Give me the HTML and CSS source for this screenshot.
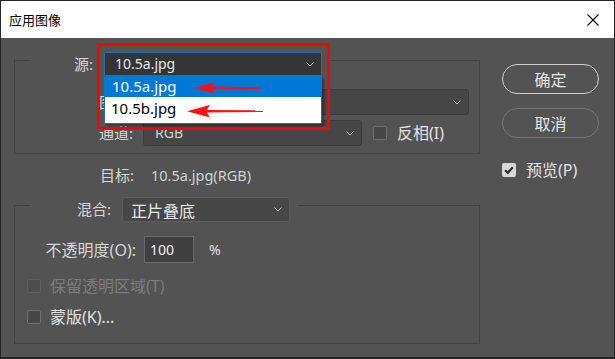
FILE: index.html
```html
<!DOCTYPE html>
<html lang="zh-CN">
<head>
<meta charset="utf-8">
<title>应用图像</title>
<link rel="stylesheet" href="styles.css">
</head>
<body>
<div class="window">
  <div class="titlebar">
    <span class="title">应用图像</span>
    <svg class="close" width="12" height="12" viewBox="0 0 12 12"><path d="M0.5 0.5 L11.5 11.5 M11.5 0.5 L0.5 11.5" stroke="#000" stroke-width="1.1" fill="none"/></svg>
  </div>
  <div class="body">
    <div class="left">
      <div class="group g1">
        <div class="legend lg1">
          <span class="lbl lbl-src">源:</span>
          <div class="select sel-src">
            <span class="stext">10.5a.jpg</span>
            <svg class="chev" width="8" height="5" viewBox="0 0 8 5"><path d="M0.5 0.5 L4 4 L7.5 0.5" stroke="#bdbdbd" stroke-width="1" fill="none"/></svg>
            <div class="redbox"></div>
            <div class="list">
              <div class="item item-sel">10.5a.jpg</div>
              <div class="item">10.5b.jpg</div>
              <svg class="arrows" width="218" height="48" viewBox="0 0 218 48">
                <path d="M104 10.5 L156 11.2 L156 13 L104 13.5 Z" fill="#ff1010"/>
                <path d="M89 12 L110 6.5 L106 12 L110 17.5 Z" fill="#ff1010"/>
                <path d="M100 34 L158 34.2 L158 36 L100 36.5 Z" fill="#ff1010"/>
                <path d="M82 35.2 L105 29 L101 35.2 L105 41.5 Z" fill="#ff1010"/>
              </svg>
            </div>
          </div>
        </div>
        <div class="row r-layer">
          <span class="lbl w-g1">图层:</span>
          <div class="select sel-layer">
            <span class="stext"></span>
            <svg class="chev" width="8" height="5" viewBox="0 0 8 5"><path d="M0.5 0.5 L4 4 L7.5 0.5" stroke="#bdbdbd" stroke-width="1" fill="none"/></svg>
          </div>
        </div>
        <div class="row r-chan">
          <span class="lbl w-g1">通道:</span>
          <div class="select sel-chan">
            <span class="stext">RGB</span>
            <svg class="chev" width="8" height="5" viewBox="0 0 8 5"><path d="M0.5 0.5 L4 4 L7.5 0.5" stroke="#bdbdbd" stroke-width="1" fill="none"/></svg>
          </div>
          <span class="cb cb-inv"></span>
          <span class="cbtext">反相(I)</span>
        </div>
      </div>

      <div class="row target">
        <span class="lbl w-target">目标:</span>
        <span class="val">10.5a.jpg(RGB)</span>
      </div>

      <div class="group g2">
        <div class="legend lg2">
          <span class="lbl lbl-blend">混合:</span>
          <div class="select sel-blend">
            <span class="stext">正片叠底</span>
            <svg class="chev" width="8" height="5" viewBox="0 0 8 5"><path d="M0.5 0.5 L4 4 L7.5 0.5" stroke="#bdbdbd" stroke-width="1" fill="none"/></svg>
          </div>
        </div>
        <div class="row r-opacity">
          <span class="lbl w-op">不透明度(O):</span>
          <div class="input">100</div>
          <span class="pct">%</span>
        </div>
        <div class="row r-check r-keep">
          <span class="cb cb-dis"></span>
          <span class="cbtext dis">保留透明区域(T)</span>
        </div>
        <div class="row r-check r-mask">
          <span class="cb"></span>
          <span class="cbtext">蒙版(K)...</span>
        </div>
      </div>
    </div>

    <div class="right">
      <div class="btn btn-ok">确定</div>
      <div class="btn btn-cancel">取消</div>
      <div class="row r-preview">
        <span class="cb cb-on">
          <svg width="14" height="14" viewBox="0 0 14 14"><path d="M3.2 7.2 L5.8 9.8 L10.8 4.2" stroke="#2d2d2d" stroke-width="2.2" fill="none"/></svg>
        </span>
        <span class="cbtext">预览(P)</span>
      </div>
    </div>
  </div>
</div>
</body>
</html>
```
FILE: styles.css
```css
html, body {
  margin: 0;
  padding: 0;
  background: #2a2a2a;
}

.window {
  width: 615px;
  height: 359px;
  box-sizing: border-box;
  border: 1px solid #262626;
  border-bottom-width: 2px;
  display: flex;
  flex-direction: column;
  font-family: "Noto Sans CJK SC", sans-serif;
  overflow: hidden;
}

.titlebar {
  flex: none;
  height: 37px;
  background: #ffffff;
  display: flex;
  align-items: center;
  justify-content: space-between;
  padding: 0 15px 0 8px;
}

.title {
  font-size: 13px;
  color: #000;
  line-height: 1;
}

.close {
  display: block;
}

.body {
  flex: 1;
  background: #535353;
  display: flex;
  padding-left: 13px;
  gap: 22px;
}

.left {
  width: 466px;
  padding-top: 22px;
  display: flex;
  flex-direction: column;
}

.group {
  box-sizing: border-box;
  border: 1px solid #434343;
  display: flex;
  flex-direction: column;
}

.g1 { height: 94px; }
.g2 { height: 139px; margin-top: 18px; }

.legend {
  align-self: flex-start;
  display: flex;
  align-items: center;
  margin: -9px 0 0 15px;
  padding-right: 8px;
  background: #535353;
}

.lg1 {
  height: 24px;
  position: relative;
  z-index: 5;
}
.lg2 { height: 25px; }

.lbl {
  font-family: "Noto Sans", "Noto Sans CJK SC", sans-serif;
  font-size: 15px;
  color: #d6d6d6;
  text-align: right;
  white-space: nowrap;
  line-height: 1;
}

.lbl-src { width: 63px; margin-right: 11px; }
.lbl-blend { width: 81px; margin-right: 11px; }
.w-g1 { width: 118px; margin-right: 10px; }
.w-target { width: 120px; margin-right: 17px; }
.w-op { width: 121px; margin-right: 8px; font-size: 16px; }

.row {
  display: flex;
  align-items: center;
}

.r-layer { height: 26px; margin-top: 13px; }
.r-chan { height: 26px; margin-top: 5px; }

.select {
  position: relative;
  box-sizing: border-box;
  height: 100%;
  display: flex;
  align-items: center;
  justify-content: space-between;
  padding: 0 7px 0 9px;
  background: #464646;
  border: 1px solid #3c3c3c;
  border-radius: 3px;
}

.stext {
  font-family: "Noto Sans", "Noto Sans CJK SC", sans-serif;
  font-size: 14px;
  color: #e8e8e8;
  line-height: 1;
  white-space: nowrap;
}

.sel-blend .stext {
  font-family: "Noto Sans CJK SC", sans-serif;
  font-size: 16px;
}

.chev { display: block; flex: none; }

.sel-src {
  width: 218px;
  background: #353535;
  border: 1px solid #1f6fc4;
  border-radius: 2px 2px 0 0;
  padding-left: 10px;
}

.sel-layer { width: 326px; }
.sel-chan { width: 219px; padding-left: 11px; }
.sel-chan .stext { color: #d0d0d0; }
.sel-blend { width: 168px; padding-left: 8px; background: #474747; border-color: #5c5c5c; }

.redbox {
  position: absolute;
  left: -8px;
  top: -10px;
  width: 233px;
  height: 87px;
  box-sizing: border-box;
  border: 3px solid #ff0000;
  pointer-events: none;
}

.list {
  position: absolute;
  left: -1px;
  top: 23px;
  width: 218px;
  height: 48px;
  box-sizing: border-box;
  border: 1px solid #1f6fc4;
  border-top: none;
  background: #ffffff;
  box-shadow: 2px 2px 2px rgba(0, 0, 0, 0.35);
}

.item {
  height: 23px;
  display: flex;
  align-items: center;
  padding-left: 6px;
  font-family: "Noto Sans", sans-serif;
  font-size: 15px;
  color: #000;
  line-height: 1;
}

.item-sel {
  height: 21px;
  background: #0078d7;
  color: #ffffff;
  padding-left: 7px;
}

.arrows {
  position: absolute;
  left: 0;
  top: 0;
}

.cb {
  flex: none;
  box-sizing: border-box;
  width: 14px;
  height: 14px;
  border: 1px solid #707070;
  border-radius: 2px;
  background: #474747;
}

.cb-inv { margin-left: 11px; margin-right: 10px; }

.cb-dis {
  border-color: #5e5e5e;
  background: #4e4e4e;
}

.cb-on {
  border: none;
  background: #d8d8d8;
  display: flex;
}

.cbtext {
  font-family: "Noto Sans", "Noto Sans CJK SC", sans-serif;
  font-size: 16px;
  color: #e2e2e2;
  line-height: 1;
  white-space: nowrap;
}

.cbtext.dis { color: #7c7c7c; }

.target {
  height: 24px;
  margin-top: 9px;
}

.val {
  font-family: "Noto Sans", sans-serif;
  font-size: 14.5px;
  color: #cdd3d8;
  line-height: 1;
}

.r-opacity { height: 27px; margin-top: 14px; }

.input {
  box-sizing: border-box;
  width: 50px;
  height: 27px;
  background: #404040;
  border: 1px solid #6a6a6a;
  display: flex;
  align-items: center;
  padding-left: 5px;
  font-family: "Noto Sans", sans-serif;
  font-size: 14px;
  color: #f0f0f0;
  line-height: 1;
}

.pct {
  margin-left: 15px;
  font-family: "Noto Sans", sans-serif;
  font-size: 14px;
  color: #e0e0e0;
  line-height: 1;
}

.r-check {
  height: 14px;
  padding-left: 12px;
  gap: 9px;
}

.r-keep { margin-top: 16px; }
.r-mask { margin-top: 17px; }

.right {
  width: 97px;
  padding-top: 26px;
  display: flex;
  flex-direction: column;
}

.btn {
  box-sizing: border-box;
  height: 30px;
  border-radius: 15px;
  display: flex;
  align-items: center;
  justify-content: center;
  font-size: 16px;
  color: #e6e6e6;
  line-height: 1;
}

.btn-ok { border: 1.5px solid #cfcfcf; }
.btn-cancel { border: 1px solid #747474; margin-top: 14px; }

.r-preview {
  margin-top: 25px;
  height: 14px;
  gap: 10px;
}
```
